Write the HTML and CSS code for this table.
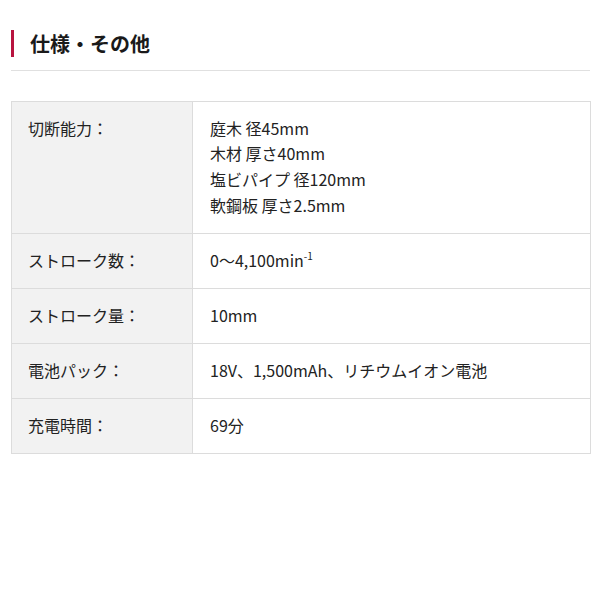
FILE: index.html
```html
<!DOCTYPE html>
<html lang="ja">
<head>
<meta charset="utf-8">
<link rel="stylesheet" href="styles.css">
</head>
<body>
<section class="spec">
  <h2 class="spec-title">仕様・その他</h2>
  <table class="spec-table">
    <tr>
      <th>切断能力：</th>
      <td>庭木 径45mm<br>木材 厚さ40mm<br>塩ビパイプ 径120mm<br>軟鋼板 厚さ2.5mm</td>
    </tr>
    <tr>
      <th>ストローク数：</th>
      <td>0～4,100min<sup>-1</sup></td>
    </tr>
    <tr>
      <th>ストローク量：</th>
      <td>10mm</td>
    </tr>
    <tr>
      <th>電池パック：</th>
      <td>18V、1,500mAh、リチウムイオン電池</td>
    </tr>
    <tr>
      <th>充電時間：</th>
      <td>69分</td>
    </tr>
  </table>
</section>
</body>
</html>
```

FILE: styles.css
```css
html, body {
  margin: 0;
  padding: 0;
  background: #fff;
}
body {
  font-family: "Noto Sans CJK JP", "Noto Sans", sans-serif;
  color: #222;
}
.spec {
  padding: 30px 10px 0 11px;
}
.spec-title {
  margin: 0;
  font-size: 20px;
  font-weight: bold;
  color: #1a1a1a;
  line-height: 27px;
  padding-left: 19px;
  background: linear-gradient(#b8143f, #b8143f) no-repeat 0 0 / 3px 27px;
}
.spec-title::after {
  content: "";
  display: block;
  height: 1px;
  background: #e0e0e0;
  margin-left: -19px;
  margin-top: 13px;
}
.spec-table {
  margin-top: 30px;
  width: 580px;
  border-collapse: collapse;
  font-size: 16px;
  line-height: 25.6px;
}
.spec-table th,
.spec-table td {
  border: 1px solid #dcdcdc;
  padding: 13.8px 17px 14.6px;
  text-align: left;
  vertical-align: top;
  font-weight: normal;
}
.spec-table th {
  width: 181px;
  box-sizing: border-box;
  background: #f2f2f2;
  padding-left: 16px;
}
.spec-table sup {
  font-size: 10px;
  line-height: 0;
  vertical-align: 7px;
}
```
